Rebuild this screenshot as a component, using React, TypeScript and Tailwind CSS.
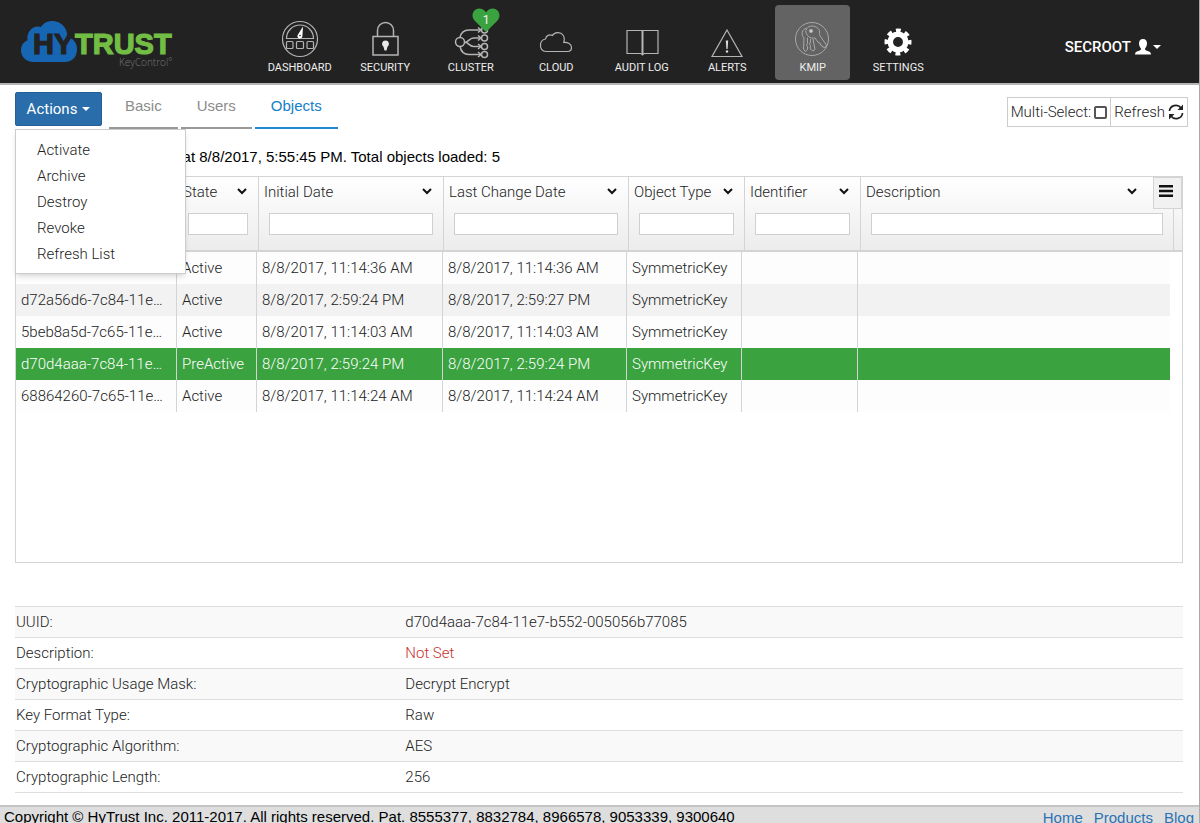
import React from "react";

const navItems = [
  { label: "DASHBOARD", icon: <DashboardIcon /> },
  { label: "SECURITY", icon: <LockIcon /> },
  { label: "CLUSTER", icon: <ClusterIcon />, badge: 1 },
  { label: "CLOUD", icon: <CloudIcon /> },
  { label: "AUDIT LOG", icon: <BookIcon /> },
  { label: "ALERTS", icon: <AlertIcon /> },
  { label: "KMIP", icon: <KeysIcon />, active: true },
  { label: "SETTINGS", icon: <GearIcon /> },
];

const actions = ["Activate", "Archive", "Destroy", "Revoke", "Refresh List"];

const columns = [
  { name: "UUID", head: "w-[162px]", body: "w-[161px]" },
  { name: "State", head: "w-[81px]", body: "w-[80px]" },
  { name: "Initial Date", head: "w-[185px]", body: "w-[186px]" },
  { name: "Last Change Date", head: "w-[185px]", body: "w-[184px]" },
  { name: "Object Type", head: "w-[116px]", body: "w-[115px]" },
  { name: "Identifier", head: "w-[116px]", body: "w-[116px]" },
  { name: "Description", head: "", body: "" },
];

const rows = [
  ["", "Active", "8/8/2017, 11:14:36 AM", "8/8/2017, 11:14:36 AM", "SymmetricKey", "", ""],
  ["d72a56d6-7c84-11e…", "Active", "8/8/2017, 2:59:24 PM", "8/8/2017, 2:59:27 PM", "SymmetricKey", "", ""],
  ["5beb8a5d-7c65-11e…", "Active", "8/8/2017, 11:14:03 AM", "8/8/2017, 11:14:03 AM", "SymmetricKey", "", ""],
  ["d70d4aaa-7c84-11e…", "PreActive", "8/8/2017, 2:59:24 PM", "8/8/2017, 2:59:24 PM", "SymmetricKey", "", ""],
  ["68864260-7c65-11e…", "Active", "8/8/2017, 11:14:24 AM", "8/8/2017, 11:14:24 AM", "SymmetricKey", "", ""],
];
const selectedRow = 3;

const details = [
  ["UUID:", "d70d4aaa-7c84-11e7-b552-005056b77085"],
  ["Description:", "Not Set"],
  ["Cryptographic Usage Mask:", "Decrypt Encrypt"],
  ["Key Format Type:", "Raw"],
  ["Cryptographic Algorithm:", "AES"],
  ["Cryptographic Length:", "256"],
];

function NavSvg({ children }: { children: React.ReactNode }) {
  return (
    <svg width="40" height="40" viewBox="0 0 40 40" fill="none" stroke="#b4b4b4" strokeWidth="1.2" aria-hidden="true">
      {children}
    </svg>
  );
}

function DashboardIcon() {
  return (
    <NavSvg>
      <circle cx="20" cy="19" r="17.5" />
      <path d="M6.5 18.5a13.5 13.5 0 0 1 27 0z" />
      <rect x="6.5" y="21.5" width="6.5" height="7" rx="1" />
      <rect x="16.5" y="21.5" width="7" height="7" rx="1" />
      <rect x="27" y="21.5" width="6.5" height="7" rx="1" />
      <path d="M23 6.500l-.6 9.500a2.500 2.500 0 1 1-4.400-1.600z" fill="#fff" stroke="none" />
      <circle cx="20" cy="15.500" r=".8" fill="#222" stroke="none" />
    </NavSvg>
  );
}

function LockIcon() {
  return (
    <NavSvg>
      <rect x="8" y="16.5" width="25" height="18.5" strokeWidth="1.5" />
      <path d="M12.5 16.5v-6a8 8 0 0 1 16 0v6" strokeWidth="1.5" />
      <path d="M20.500 20.500a3.400 3.400 0 0 1 2 6.200l-1 3.800h-2l-1-3.800a3.400 3.400 0 0 1 2-6.200z" fill="#e8e8e8" stroke="none" />
    </NavSvg>
  );
}

function ClusterIcon() {
  return (
    <NavSvg>
      <g strokeWidth="1.5">
        <circle cx="9" cy="22" r="4.5" />
        <circle cx="33.5" cy="10" r="3" />
        <circle cx="33.5" cy="18" r="3" />
        <circle cx="33.5" cy="26.5" r="3" />
        <circle cx="33.5" cy="34.5" r="3" />
        <path d="M9 17.500c1-5 4-7.500 9-7.500h12M13.500 22.500c4 0 4.500-4.500 9-4.500h8M13.500 22c4 0 4.500 4.500 9 4.500h8M9 26.500c1 5 4 8 9 8h12" />
        <path d="M27 7.500l3 2.500-3 2.500M27 15.500l3 2.500-3 2.500M27 24l3 2.500-3 2.500M27 32l3 2.500-3 2.500" />
      </g>
    </NavSvg>
  );
}

function CloudIcon() {
  return (
    <NavSvg>
      <path d="M10 31.500c-4 0-6-3.500-5.500-7 .3-3 2-5 5-5.500.5-3.500 4-5 7-3.500 2-3.500 8-4 10.500-.5 1.500 2.200 1.500 5 .8 7.500 4-.3 7.700 1.500 7.700 5 0 2.500-1.500 4-4 4z" />
    </NavSvg>
  );
}

function BookIcon() {
  return (
    <NavSvg>
      <path d="M5 10.5h31v23H22l-1.500 1.500-1.500-1.500H5z" />
      <path d="M20.500 10.500V34" strokeWidth="2" />
    </NavSvg>
  );
}

function AlertIcon() {
  return (
    <NavSvg>
      <path d="M20 10L35 36.500H5z" />
      <path d="M18.800 20.500h2.400l-.6 8.500h-1.200z" fill="#ddd" stroke="none" />
      <circle cx="20" cy="31.500" r="1.200" fill="#ddd" stroke="none" />
    </NavSvg>
  );
}

function KeysIcon() {
  return (
    <NavSvg>
      <g stroke="#a9a9a9" strokeWidth="1">
        <circle cx="19" cy="19" r="16.500" />
        <path d="M14.500 15.500c-4-5 0-9.500 4.500-9.500s8.500 3.500 7.500 7.500c-.3 1.500 1 3 2 4.500l5 7-1 2.500-3-.5-.5-1.500-1.500-.5-.5-2-2-.8-3-4.200c-2 .5-5.500 0-7.500-2.500z" />
        <path d="M13.500 8c-5 1.500-5.500 7-2.500 10l-.5 11 1.800 2.500 2.200-2v-3l-1-1.500 1-1.500v-6" />
        <path d="M17.500 19v3l-1 2 1 1.500-.5 3 3 2.500 2-1.500-2-10.500" />
        <circle cx="18" cy="11" r="1.700" fill="#c8c8c8" />
      </g>
    </NavSvg>
  );
}

function GearIcon() {
  return (
    <NavSvg>
      <circle cx="20" cy="22" r="7.700" stroke="#fff" strokeWidth="5.500" />
      <circle cx="20" cy="22" r="11.500" stroke="#fff" strokeWidth="4" strokeDasharray="4.800 4.232" strokeDashoffset="2.400" />
    </NavSvg>
  );
}

function Logo() {
  return (
    <svg width="160" height="52" viewBox="0 0 160 52" role="img" aria-label="HyTrust KeyControl">
      <path d="M14 43C5 43 1 37 1 31.500c0-5.500 3-9 6.500-10C6 12 14 5.500 21 8c4-7 15-8 21-2.500 4 3.500 5.500 7.500 5 12 6 2 10 6 10 12.500C57 38 52 43 45 43z" fill="#1766b3" />
      <g fontFamily="'Liberation Sans', Arial, sans-serif" fontWeight="bold" fontSize="29" strokeWidth="1.2">
        <text x="13" y="35" fill="#222" stroke="#222">HY</text>
        <text x="55" y="35" fill="#72be44" stroke="#72be44">TRUST</text>
      </g>
      <text x="99" y="47" fill="#777" fontFamily="'Open Sans', sans-serif" fontSize="10">KeyControl°</text>
    </svg>
  );
}

function Caret() {
  return <span className="inline-block border-x-4 border-t-4 border-x-transparent border-t-current" />;
}

function Chevron() {
  return (
    <svg width="10" height="8" viewBox="0 0 10 8" fill="none" stroke="#111" strokeWidth="2" aria-hidden="true">
      <path d="M1 1l4 4 4-4" />
    </svg>
  );
}

function RefreshIcon() {
  return (
    <svg width="16" height="16" viewBox="0 0 16 16" fill="none" stroke="#222" strokeWidth="1.7" aria-hidden="true">
      <path d="M1.500 7A6.300 6 0 0 1 13 4M14.500 9A6.300 6 0 0 1 3 12" />
      <path d="M15 .5v5.500H9.500zM1 15.500V10h5.500z" fill="#222" stroke="none" />
    </svg>
  );
}

const Header = () => {
  return (
    <header className="flex h-[85px] border-b-2 border-[#b5b5b5] bg-[#222]">
      <div className="w-[257px] pl-5 pt-[19px]">
        <Logo />
      </div>
      <nav className="grid w-[684px] grid-cols-8 justify-items-center pt-[5px]">
        {navItems.map((item) => (
          <a
            key={item.label}
            href="#"
            className={`relative flex h-[75px] w-[75px] flex-col items-center rounded-sm pt-[15px] text-[11px] leading-4 font-normal whitespace-nowrap text-[#eee] ${
              item.active ? "bg-[#636363]" : ""
            }`}
          >
            {item.icon}
            {item.label}
            {item.badge && (
              <span className="absolute top-[3px] right-2 flex h-6 w-7 justify-center">
                <svg className="absolute inset-0" width="28" height="24" viewBox="0 0 28 24" aria-hidden="true">
                  <path d="M14 24L2.500 12.500C-3 6 4-2.500 11 1.500c1.500.8 2.500 2 3 3 .5-1 1.500-2.200 3-3 7-4 14 4.500 8.500 11z" fill="#3aa23f" />
                </svg>
                <span className="relative text-[13px] leading-[24px]">{item.badge}</span>
              </span>
            )}
          </a>
        ))}
      </nav>
      <button className="mr-[38px] ml-auto flex items-center gap-[2px] pt-[10px] text-[15px] font-medium text-white">
        SECROOT
        <svg className="ml-[2px]" width="16" height="16" viewBox="0 0 16 16" fill="#fff" aria-hidden="true">
          <path d="M8 0c2.800 0 4 2 4 4.500S10.800 8.500 10 9.500c0 1.500.5 1.800 2.500 2.500 2.500.8 3.500 1.500 3.500 3.500H0C0 13.500 1 12.800 3.500 12c2-.7 2.500-1 2.500-2.500-.8-1-2-2.500-2-5S5.200 0 8 0z" />
        </svg>
        <Caret />
      </button>
    </header>
  );
};

const Toolbar = () => {
  return (
    <div className="flex items-start">
      <div className="relative mr-[7px]">
        <button className="mt-[7px] flex h-[34px] w-[87px] items-center justify-center gap-[5px] rounded-xs border border-[#245f96] bg-[#2a6dab] text-[15px] font-normal text-white">
          Actions <Caret />
        </button>
        <ul className="absolute top-[44px] left-0 z-10 w-[171px] border border-[#ccc] bg-white pt-[7px] pb-[6px] shadow-md">
          {actions.map((action) => (
            <li key={action}>
              <a href="#" className="block pl-[21px] leading-[26px]">
                {action}
              </a>
            </li>
          ))}
        </ul>
      </div>
      <nav className="flex gap-[3px] font-['Liberation_Sans',Arial,sans-serif] text-[15px] font-normal">
        <a href="#" className="h-11 border-b-2 border-[#999] px-4 leading-[42px] text-[#8c8c8c]">Basic</a>
        <a href="#" className="h-11 border-b-2 border-[#999] px-4 leading-[42px] text-[#8c8c8c]">Users</a>
        <a href="#" className="h-11 border-b-2 border-[#1f8ad0] px-4 leading-[42px] text-[#1480c8]">Objects</a>
      </nav>
      <div className="mt-3 -mr-[5px] ml-auto flex h-[30px] border border-[#ccc]">
        <label className="flex items-center gap-[3px] px-[3px]">
          Multi-Select:
          <input type="checkbox" className="h-[13px] w-[13px] appearance-none rounded-xs border-2 border-[#555]" />
        </label>
        <button className="flex items-center gap-[3px] border-l border-[#ccc] px-[3px]">
          Refresh <RefreshIcon />
        </button>
      </div>
    </div>
  );
};

const ObjectGrid = () => {
  return (
    <div className="relative mt-[9px] h-[387px] border border-[#d4d4d4]">
      <div className="border-b-2 border-[#d4d4d4] bg-linear-to-b from-white to-[#ececec] pr-2">
        <table className="w-full table-fixed border-separate border-spacing-0">
          <thead>
            <tr>
              {columns.map((col) => (
                <th key={col.name} className={`h-[73px] border-r border-[#d4d4d4] p-0 align-top font-light ${col.head}`}>
                  <div className={`flex h-[30px] items-center justify-between pl-[5px] ${col.name === "Description" ? "pr-9" : "pr-[11px]"}`}>
                    {col.name}
                    <Chevron />
                  </div>
                  <div className="px-[10px] pt-[6px]">
                    <input type="text" aria-label={`Filter ${col.name}`} className="block h-[22px] w-full border border-[#d0d0d0] bg-white" />
                  </div>
                </th>
              ))}
            </tr>
          </thead>
        </table>
      </div>
      <button aria-label="Grid menu" className="absolute top-0 right-0 flex h-8 w-[29px] items-center justify-center border border-[#d4d4d4] bg-[#f1f1f1] pr-1 pb-1">
        <svg width="14" height="12" viewBox="0 0 14 12" fill="#111" aria-hidden="true">
          <path d="M0 0h14v2.500H0zM0 4.700h14v2.500H0zM0 9.400h14v2.500H0z" />
        </svg>
      </button>
      <div className="pr-3">
        <table className="w-full table-fixed border-separate border-spacing-0">
          <tbody>
            {rows.map((row, i) => (
              <tr
                key={i}
                className={i === selectedRow ? "bg-[#3aa23f] text-white" : i % 2 === 1 ? "bg-[#f2f2f2]" : "bg-[#fdfdfd]"}
              >
                {row.map((cell, j) => (
                  <td key={j} className={`h-8 border-[#d4d4d4] py-0 pr-0 pl-[5px] whitespace-nowrap not-last:border-r ${columns[j].body}`}>
                    {cell}
                  </td>
                ))}
              </tr>
            ))}
          </tbody>
        </table>
      </div>
    </div>
  );
};

const ObjectDetails = () => {
  return (
    <table className="mt-[43px] w-full table-fixed border-b border-[#ddd]">
      <tbody>
        {details.map(([name, value]) => (
          <tr key={name} className="border-t border-[#ddd] odd:bg-[#f9f9f9]">
            <th className="h-[31px] w-1/3 py-0 pr-0 pl-px text-left font-light">{name}</th>
            <td className={`py-0 pr-0 pl-px ${value === "Not Set" ? "text-[#c9302c]" : ""}`}>{value}</td>
          </tr>
        ))}
      </tbody>
    </table>
  );
};

const App = () => {
  return (
    <div className="flex min-h-screen flex-col border-r border-[#aaa] bg-white font-[Roboto,'Liberation_Sans',sans-serif] text-[15px] leading-5 font-light text-[#222]">
      <Header />
      <main className="flex-1 pr-4 pl-[15px]">
        <Toolbar />
        <p className="mt-[18px] font-['Liberation_Sans',Arial,sans-serif] font-normal text-black">
          Objects last downloaded at 8/8/2017, 5:55:45 PM. Total objects loaded: 5
        </p>
        <ObjectGrid />
        <ObjectDetails />
      </main>
      <footer className="flex h-[18px] justify-between overflow-hidden border-t-2 border-[#c4c4c4] bg-[#dedede] pr-[5px] pl-1 font-['Liberation_Sans',Arial,sans-serif] font-normal text-black">
        <span>Copyright © HyTrust Inc. 2011-2017. All rights reserved. Pat. 8555377, 8832784, 8966578, 9053339, 9300640</span>
        <span className="flex gap-[11px] pt-px text-[#2a72b5]">
          <a href="#">Home</a>
          <a href="#">Products</a>
          <a href="#">Blog</a>
        </span>
      </footer>
    </div>
  );
};

export default App;
